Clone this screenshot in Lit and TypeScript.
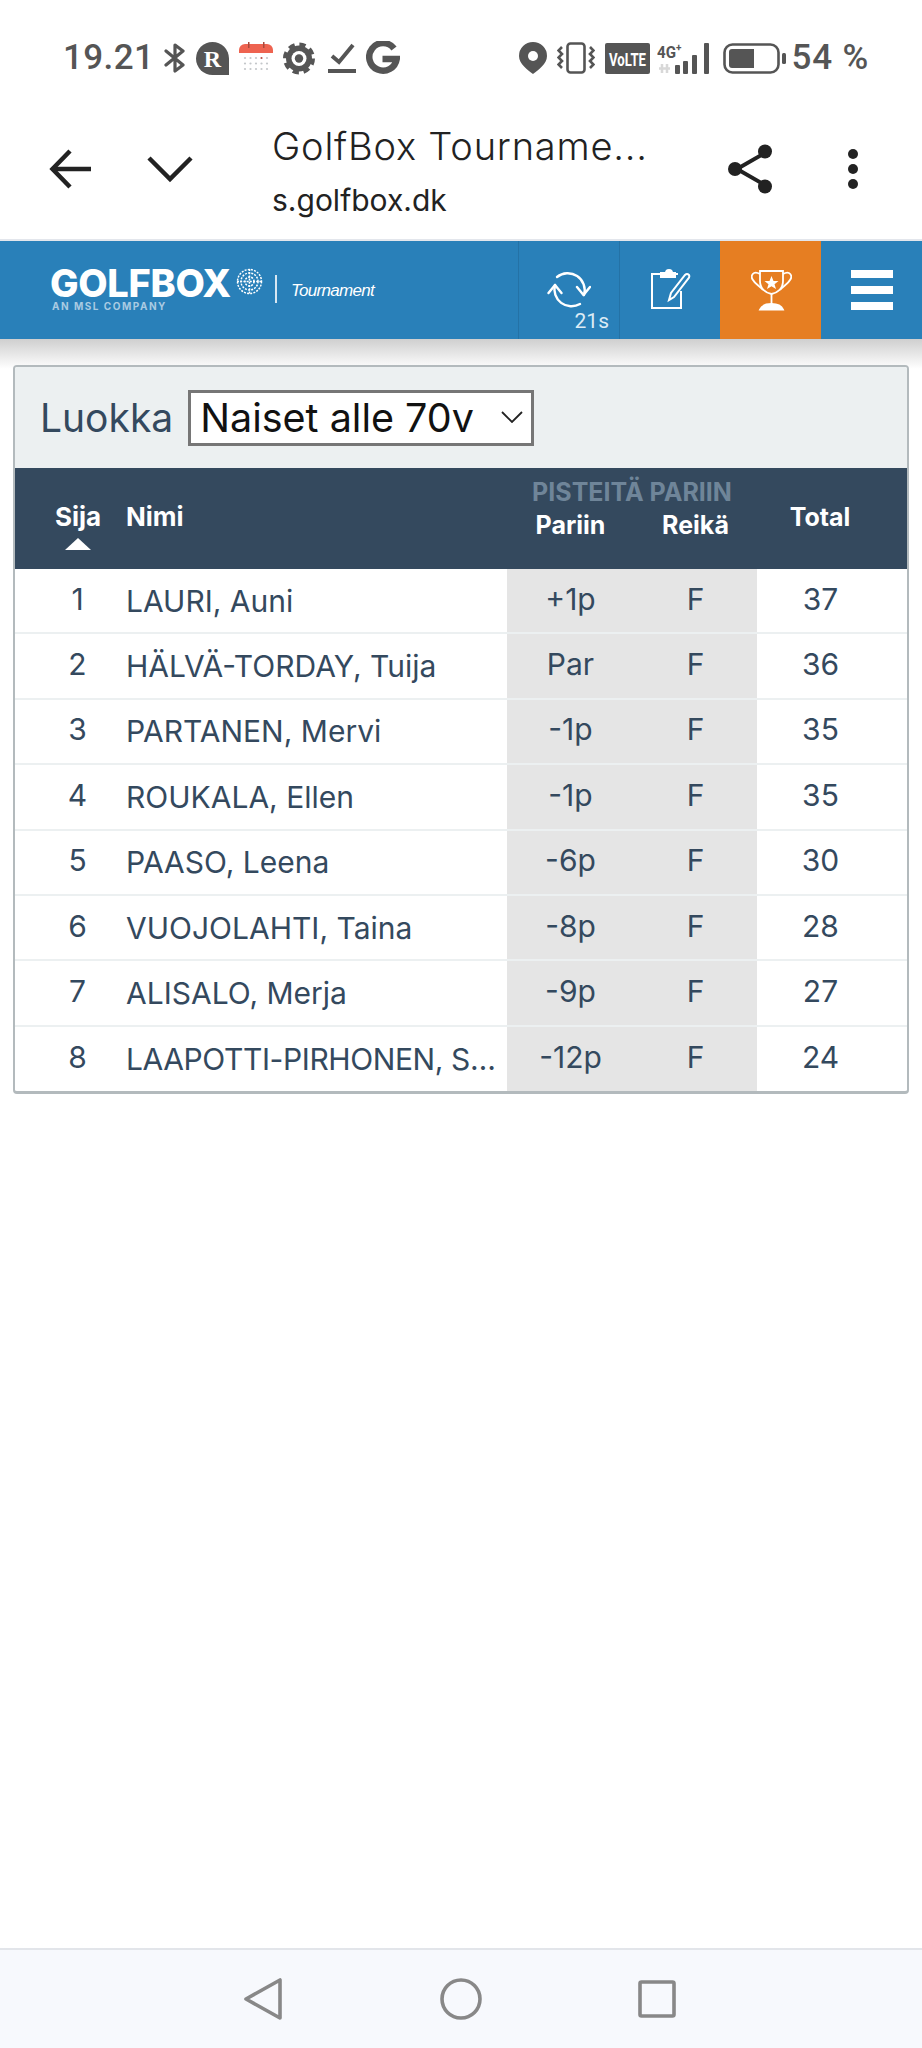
import { LitElement, css, html, svg } from 'lit';
import { customElement } from 'lit/decorators.js';
import { classMap } from 'lit/directives/class-map.js';

interface ScoreRow {
  rank: number;
  name: string;
  toPar: string;
  hole: string;
  total: number;
  cut?: boolean;
}

const ROWS: ScoreRow[] = [
  { rank: 1, name: 'LAURI, Auni', toPar: '+1p', hole: 'F', total: 37 },
  { rank: 2, name: 'HÄLVÄ-TORDAY, Tuija', toPar: 'Par', hole: 'F', total: 36 },
  { rank: 3, name: 'PARTANEN, Mervi', toPar: '-1p', hole: 'F', total: 35 },
  { rank: 4, name: 'ROUKALA, Ellen', toPar: '-1p', hole: 'F', total: 35 },
  { rank: 5, name: 'PAASO, Leena', toPar: '-6p', hole: 'F', total: 30 },
  { rank: 6, name: 'VUOJOLAHTI, Taina', toPar: '-8p', hole: 'F', total: 28 },
  { rank: 7, name: 'ALISALO, Merja', toPar: '-9p', hole: 'F', total: 27 },
  { rank: 8, name: 'LAAPOTTI-PIRHONEN, S…', toPar: '-12p', hole: 'F', total: 24, cut: true }
];

const calendarDots = [0, 1, 2].flatMap((r) =>
  [0, 1, 2, 3, 4].map(
    (c) => svg`<circle cx=${6 + c * 5.5} cy=${16 + r * 5.5} r="1.1" fill=${r === 0 && c === 3 ? '#b5504a' : '#c4c7ca'}></circle>`
  )
);

@customElement('app-root')
export class AppRoot extends LitElement {
  static styles = css`
    :host {
      display: block;
      width: 922px;
      height: 2048px;
      background: #ffffff;
      font-family: 'Inter', 'Liberation Sans', sans-serif;
      overflow: hidden;
    }

    .page {
      display: flex;
      flex-direction: column;
      height: 2048px;
    }

    /* phone status bar */
    .status-bar {
      display: flex;
      justify-content: space-between;
      align-items: center;
      height: 34px;
      padding: 41px 53px 15px 63px;
      color: #555555;
      font-family: 'Roboto', sans-serif;
    }

    .status-group {
      display: flex;
      align-items: center;
      gap: 10px;
    }

    .status-group svg {
      display: block;
      flex: none;
    }

    .clock,
    .battery-text {
      font-size: 35px;
      line-height: 34px;
      letter-spacing: 0.4px;
      font-weight: 500;
    }

    .tight {
      margin-left: -3px;
    }

    .wide {
      margin-left: 3px;
    }

    .battery-text {
      margin-left: -4px;
      letter-spacing: 0.8px;
    }

    /* browser custom tab bar */
    .toolbar {
      display: flex;
      align-items: center;
      height: 149px;
      border-bottom: 2px solid #e3e6ec;
    }

    .toolbar svg {
      display: block;
      flex: none;
      margin-top: 8px;
    }

    .back {
      margin-left: 49px;
    }

    .down {
      margin-left: 56px;
    }

    .titles {
      flex: 1;
      margin-left: 79px;
      padding-top: 14px;
      color: #222222;
    }

    .title {
      font-size: 38px;
      line-height: 46px;
      font-weight: 300;
      letter-spacing: 0.8px;
    }

    .url {
      font-size: 30px;
      line-height: 40px;
      margin-top: 11px;
    }

    .share {
      margin-right: 74px;
    }

    .dots {
      margin-right: 64px;
    }

    /* golfbox header */
    .site-header {
      display: flex;
      align-items: stretch;
      height: 98px;
      background: #2980b9;
      color: #ffffff;
    }

    .logo {
      flex: 1;
      display: flex;
      padding: 27px 0 0 50px;
    }

    .logo-words {
      display: flex;
      flex-direction: column;
    }

    .logo-name {
      font-size: 38px;
      line-height: 30px;
      font-weight: 800;
      letter-spacing: -0.3px;
      font-family: 'Inter', sans-serif;
    }

    .logo-sub {
      font-size: 10px;
      line-height: 12px;
      font-weight: 700;
      letter-spacing: 1.5px;
      margin: 2px 0 0 2px;
      color: #a9cbe2;
    }

    .globe {
      margin: 0 0 0 5px;
      display: block;
    }

    .logo-rule {
      width: 2px;
      height: 28px;
      background: #d7e7f2;
      margin: 7px 14px 0 12px;
    }

    .logo-tag {
      font-family: 'Liberation Sans', sans-serif;
      font-style: italic;
      font-size: 17px;
      line-height: 20px;
      margin-top: 13px;
      letter-spacing: -0.7px;
    }

    .nav-cell {
      position: relative;
      display: flex;
      align-items: center;
      justify-content: center;
      width: 100px;
      border-left: 1px solid #2472a6;
    }

    .nav-cell svg {
      display: block;
    }

    .nav-cell.active {
      background: #e67e22;
      border-left-color: #e67e22;
    }

    .nav-cell.menu {
      border-left: none;
      width: 101px;
      flex-direction: column;
      gap: 8px;
    }

    .bar {
      width: 42px;
      height: 8px;
      background: #ffffff;
    }

    .timer {
      position: absolute;
      right: 10px;
      bottom: 7px;
      font-family: 'Roboto', sans-serif;
      font-size: 21px;
      line-height: 22px;
      color: #dcebf5;
    }

    /* content */
    .content {
      flex: 1;
      padding: 26px 13px 0;
      background: linear-gradient(#cfcfcf, #ffffff 30px) no-repeat;
    }

    .card {
      border: 2px solid #b3babd;
      border-bottom-width: 3px;
      border-radius: 4px;
      background: #ffffff;
      overflow: hidden;
    }

    .filter {
      display: flex;
      align-items: center;
      gap: 15px;
      height: 101px;
      padding-left: 25px;
      background: #ecf0f1;
    }

    .filter-label {
      font-size: 39px;
      color: #34495e;
    }

    .select-wrap {
      position: relative;
      display: block;
    }

    select {
      display: block;
      appearance: none;
      width: 346px;
      height: 56px;
      padding: 0 0 0 9px;
      border: 3px solid #767676;
      border-radius: 0;
      background: #ffffff;
      color: #111111;
      font-family: 'Inter', sans-serif;
      font-size: 39.5px;
    }

    .select-arrow {
      position: absolute;
      right: 11px;
      top: 21px;
      display: block;
    }

    table {
      width: 100%;
      table-layout: fixed;
      border-collapse: collapse;
      color: #34495e;
    }

    thead {
      background: #34495e;
      color: #ffffff;
    }

    th {
      font-size: 25px;
      font-weight: 700;
      padding: 0;
      line-height: 30px;
      vertical-align: middle;
    }

    .head-group {
      height: 41px;
      padding-top: 6px;
      box-sizing: border-box;
      color: #6f8599;
    }

    .head-sub {
      height: 59px;
      vertical-align: top;
      padding-top: 1px;
    }

    .col-rank {
      padding-left: 21px;
      text-align: center;
    }

    .col-name {
      padding: 0 0 0 6px;
      text-align: left;
    }

    .col-name.cut {
      letter-spacing: -0.4px;
    }

    .col-total {
      padding-right: 24px;
      text-align: center;
    }

    th.col-total {
      padding-bottom: 4px;
    }

    .sort-mark {
      width: 0;
      height: 0;
      margin: 6px auto 0;
      border-left: 13px solid transparent;
      border-right: 13px solid transparent;
      border-bottom: 12px solid #ffffff;
    }

    .head-sort {
      padding-top: 34px;
      vertical-align: top;
      font-size: 26px;
    }

    tbody td {
      height: 59.4px;
      padding-top: 0;
      padding-bottom: 4px;
      font-size: 30px;
      border-bottom: 2px solid #ecf0f1;
      white-space: nowrap;
    }

    tbody tr:last-child td {
      height: 60px;
      border-bottom: none;
    }

    td.shade {
      background: #e5e5e5;
      text-align: center;
    }

    /* phone navigation */
    .phone-nav {
      display: flex;
      align-items: center;
      justify-content: center;
      gap: 158px;
      height: 98px;
      border-top: 2px solid #e2e5ea;
      background: #f7f9fd;
    }

    .phone-nav svg {
      display: block;
    }

    .nav-back {
      margin-left: -2px;
    }

    .nav-recent {
      margin-left: -2px;
    }
  `;

  private renderStatusBar() {
    return html`
      <div class="status-bar">
        <div class="status-group">
          <span class="clock">19.21</span>
          <svg width="22" height="30" viewBox="0 0 22 30" fill="none" stroke="#555" stroke-width="3.200" stroke-linejoin="round" stroke-linecap="round">
            <path d="M2 8 L19 22 L11 28 V2 L19 8 L2 22"></path>
          </svg>
          <svg width="33" height="33" viewBox="0 0 33 33">
            <path d="M16.5 0 A16.5 16.5 0 1 0 16.5 33 H33 V16.5 A16.5 16.5 0 0 0 16.5 0 Z" fill="#555"></path>
            <text x="16.5" y="25" text-anchor="middle" font-family="Liberation Serif" font-weight="700" font-size="24" fill="#fff">R</text>
          </svg>
          <svg width="34" height="32" viewBox="0 0 34 32">
            <path d="M0 11 V8 A6 6 0 0 1 6 2 H28 A6 6 0 0 1 34 8 V11 Z" fill="#ee6350"></path>
            <rect x="9" y="0" width="1.5" height="6" fill="#a9483b"></rect>
            <rect x="24" y="0" width="1.5" height="6" fill="#a9483b"></rect>
            ${calendarDots}
          </svg>
          <svg width="32" height="33" viewBox="0 0 32 33">
            <circle cx="16" cy="16.5" r="13" fill="#555"></circle>
            <circle cx="16" cy="16.5" r="13.5" fill="none" stroke="#555" stroke-width="5" stroke-dasharray="6 4.6"></circle>
            <circle cx="16" cy="16.5" r="7.5" fill="#fff"></circle>
            <circle cx="16" cy="16.5" r="4.2" fill="#555"></circle>
          </svg>
          <svg class="wide" width="28" height="32" viewBox="0 0 28 32" fill="none" stroke="#555" stroke-width="4">
            <path d="M4 14 L11 20 L25 3"></path>
            <path d="M0 29 H28"></path>
          </svg>
          <svg width="34" height="34" viewBox="0 0 34 34" fill="none" stroke="#555" stroke-width="6.5">
            <path d="M28 7.5 A13.8 13.8 0 1 0 30.7 18 H16.5"></path>
          </svg>
        </div>
        <div class="status-group">
          <svg width="28" height="32" viewBox="0 0 28 32">
            <path d="M14 0 A14 14 0 0 1 28 14 C28 22 19 28 14 32 C9 28 0 22 0 14 A14 14 0 0 1 14 0 Z" fill="#555"></path>
            <circle cx="14" cy="14" r="5" fill="#fff"></circle>
          </svg>
          <svg width="38" height="32" viewBox="0 0 38 32" fill="none" stroke="#555" stroke-width="2.6">
            <rect x="10.5" y="1.5" width="17" height="29" rx="3"></rect>
            <path d="M5 5 L1.5 8.5 L5 12 L1.5 15.500 L5 19 L1.500 22.500 L5 26"></path>
            <path d="M33 5 L36.500 8.500 L33 12 L36.500 15.500 L33 19 L36.500 22.500 L33 26"></path>
          </svg>
          <svg width="45" height="31" viewBox="0 0 45 31">
            <rect width="45" height="31" rx="2" fill="#555"></rect>
            <text x="22.500" y="23" text-anchor="middle" font-family="Roboto" font-weight="700" font-size="17.500" textLength="37" lengthAdjust="spacingAndGlyphs" fill="#fff">VoLTE</text>
          </svg>
          <svg class="tight" width="53" height="33" viewBox="0 0 53 33">
            <text x="0" y="16" font-family="Roboto" font-weight="700" font-size="17" textLength="19" lengthAdjust="spacingAndGlyphs" fill="#555">4G</text>
            <text x="19" y="9" font-family="Roboto" font-weight="700" font-size="10" fill="#555">+</text>
            <path d="M5 22 V31 M10 22 V31 M2 26.500 H13" stroke="#d8d8d8" stroke-width="2.500"></path>
            <rect x="18" y="23" width="5" height="9" rx="1" fill="#555"></rect>
            <rect x="26" y="19" width="5" height="13" rx="1" fill="#555"></rect>
            <rect x="35" y="13" width="5" height="19" rx="1" fill="#555"></rect>
            <rect x="47" y="1" width="5" height="31" rx="1" fill="#555"></rect>
          </svg>
          <svg class="wide" width="63" height="31" viewBox="0 0 63 31">
            <rect x="1.500" y="1.500" width="54" height="28" rx="8" fill="none" stroke="#555" stroke-width="2.600"></rect>
            <path d="M9 6 H31 V25 H9 A3 3 0 0 1 6 22 V9 A3 3 0 0 1 9 6 Z" fill="#555"></path>
            <rect x="59" y="10" width="4" height="11" rx="1.500" fill="#555"></rect>
          </svg>
          <span class="battery-text">54 %</span>
        </div>
      </div>
    `;
  }

  private renderToolbar() {
    return html`
      <div class="toolbar">
        <svg class="back" width="42" height="40" viewBox="0 0 42 40" fill="none" stroke="#222" stroke-width="4.500">
          <path d="M21 2 L3.500 20 L21 38"></path>
          <path d="M3.500 20 H42"></path>
        </svg>
        <svg class="down" width="46" height="28" viewBox="0 0 46 28" fill="none" stroke="#222" stroke-width="4.500">
          <path d="M2 3 L23 24 L44 3"></path>
        </svg>
        <div class="titles">
          <div class="title">GolfBox Tourname...</div>
          <div class="url">s.golfbox.dk</div>
        </div>
        <svg class="share" width="46" height="50" viewBox="0 0 46 50" fill="#222" stroke="#222">
          <path d="M37 9 L9 25 L37 41" fill="none" stroke-width="4"></path>
          <circle cx="37" cy="7.500" r="7" stroke="none"></circle>
          <circle cx="7" cy="25" r="7" stroke="none"></circle>
          <circle cx="37" cy="42.500" r="7" stroke="none"></circle>
        </svg>
        <svg class="dots" width="10" height="40" viewBox="0 0 10 40" fill="#222">
          <circle cx="5" cy="5" r="5"></circle>
          <circle cx="5" cy="20" r="5"></circle>
          <circle cx="5" cy="35" r="5"></circle>
        </svg>
      </div>
    `;
  }

  private renderSiteHeader() {
    return html`
      <header class="site-header">
        <div class="logo">
          <div class="logo-words">
            <span class="logo-name">GOLFBOX</span>
            <span class="logo-sub">AN MSL COMPANY</span>
          </div>
          <svg class="globe" width="27" height="27" viewBox="0 0 27 27" fill="none" stroke="#fff" stroke-width="1.500" stroke-dasharray="2 1.200">
            <circle cx="13.500" cy="13.500" r="12"></circle>
            <circle cx="13.500" cy="13.500" r="8.500"></circle>
            <circle cx="13.500" cy="13.500" r="4.500"></circle>
            <path d="M1 13.500 H26 M13.500 1 V26"></path>
          </svg>
          <span class="logo-rule"></span>
          <span class="logo-tag">Tournament</span>
        </div>
        <div class="nav-cell">
          <svg width="44" height="38" viewBox="0 0 44 38" fill="none" stroke="#fff" stroke-width="2.400" stroke-linecap="round" stroke-linejoin="round">
            <path d="M10 6 A17 17 0 0 1 37 24"></path>
            <path d="M30 16 L36.500 24 L43 16"></path>
            <path d="M8 14 A17 17 0 0 0 33 33"></path>
            <path d="M1.500 22 L8 14 L14.500 22"></path>
          </svg>
          <span class="timer">21s</span>
        </div>
        <div class="nav-cell">
          <svg width="42" height="42" viewBox="0 0 42 42" fill="none" stroke="#fff" stroke-width="2">
            <path d="M12 5 H3 V39 H32 V22"></path>
            <path d="M26 5 H29"></path>
            <path d="M12 8 V4 H17 A3 3 0 0 1 23 4 H26 V8 Z" fill="#fff"></path>
            <path d="M20 31 L22 24 L36 6 Q38 4 40 6 Q41 8 39 10 L25 28 Z"></path>
          </svg>
        </div>
        <div class="nav-cell active">
          <svg width="41" height="42" viewBox="0 0 41 42" fill="none" stroke="#fff" stroke-width="1.800">
            <path d="M9 2 H32 V12 C32 20 26 24 20.500 25 C15 24 9 20 9 12 Z"></path>
            <path d="M9 5 C2 1 -1 7 2 11 C4 15 9 17 12 21"></path>
            <path d="M32 5 C39 1 42 7 39 11 C37 15 32 17 29 21"></path>
            <path d="M20.500 25 V35"></path>
            <path d="M9 40.500 C11 36 16 35 20.500 35 C25 35 30 36 32 40.500 Z" fill="#fff"></path>
            <polygon points="20.500,7 22.500,12 27.500,12 23.500,15.200 25,20 20.500,17.200 16,20 17.500,15.200 13.500,12 18.500,12" fill="#fff" stroke="none"></polygon>
          </svg>
        </div>
        <div class="nav-cell menu">
          <span class="bar"></span>
          <span class="bar"></span>
          <span class="bar"></span>
        </div>
      </header>
    `;
  }

  private renderTable() {
    return html`
      <table>
        <colgroup>
          <col style="width:105px" />
          <col />
          <col style="width:127px" />
          <col style="width:123px" />
          <col style="width:150px" />
        </colgroup>
        <thead>
          <tr>
            <th class="col-rank head-sort" rowspan="2">Sija<div class="sort-mark"></div></th>
            <th class="col-name head-sort" rowspan="2">Nimi</th>
            <th class="head-group" colspan="2">PISTEITÄ PARIIN</th>
            <th class="col-total" rowspan="2">Total</th>
          </tr>
          <tr>
            <th class="head-sub">Pariin</th>
            <th class="head-sub">Reikä</th>
          </tr>
        </thead>
        <tbody>
          ${ROWS.map(
            (row) => html`
              <tr>
                <td class="col-rank">${row.rank}</td>
                <td class=${classMap({ 'col-name': true, cut: !!row.cut })}>${row.name}</td>
                <td class="shade">${row.toPar}</td>
                <td class="shade">${row.hole}</td>
                <td class="col-total">${row.total}</td>
              </tr>
            `
          )}
        </tbody>
      </table>
    `;
  }

  override render() {
    return html`
      <div class="page">
        ${this.renderStatusBar()} ${this.renderToolbar()} ${this.renderSiteHeader()}
        <main class="content">
          <section class="card">
            <div class="filter">
              <span class="filter-label">Luokka</span>
              <span class="select-wrap">
                <select>
                  <option>Naiset alle 70v</option>
                </select>
                <svg class="select-arrow" width="22" height="12" viewBox="0 0 22 12" fill="none" stroke="#222" stroke-width="1.800">
                  <path d="M1 1 L11 11 L21 1"></path>
                </svg>
              </span>
            </div>
            ${this.renderTable()}
          </section>
        </main>
        <nav class="phone-nav">
          <svg class="nav-back" width="38" height="42" viewBox="0 0 38 42" fill="none" stroke="#888" stroke-width="3.600" stroke-linejoin="round">
            <path d="M2 21 L36 2 V40 Z"></path>
          </svg>
          <svg width="42" height="42" viewBox="0 0 42 42" fill="none" stroke="#888" stroke-width="3.600">
            <circle cx="21" cy="21" r="19"></circle>
          </svg>
          <svg class="nav-recent" width="38" height="38" viewBox="0 0 38 38" fill="none" stroke="#888" stroke-width="3.600" stroke-linejoin="round">
            <rect x="2" y="2" width="34" height="34" rx="1.500"></rect>
          </svg>
        </nav>
      </div>
    `;
  }
}
